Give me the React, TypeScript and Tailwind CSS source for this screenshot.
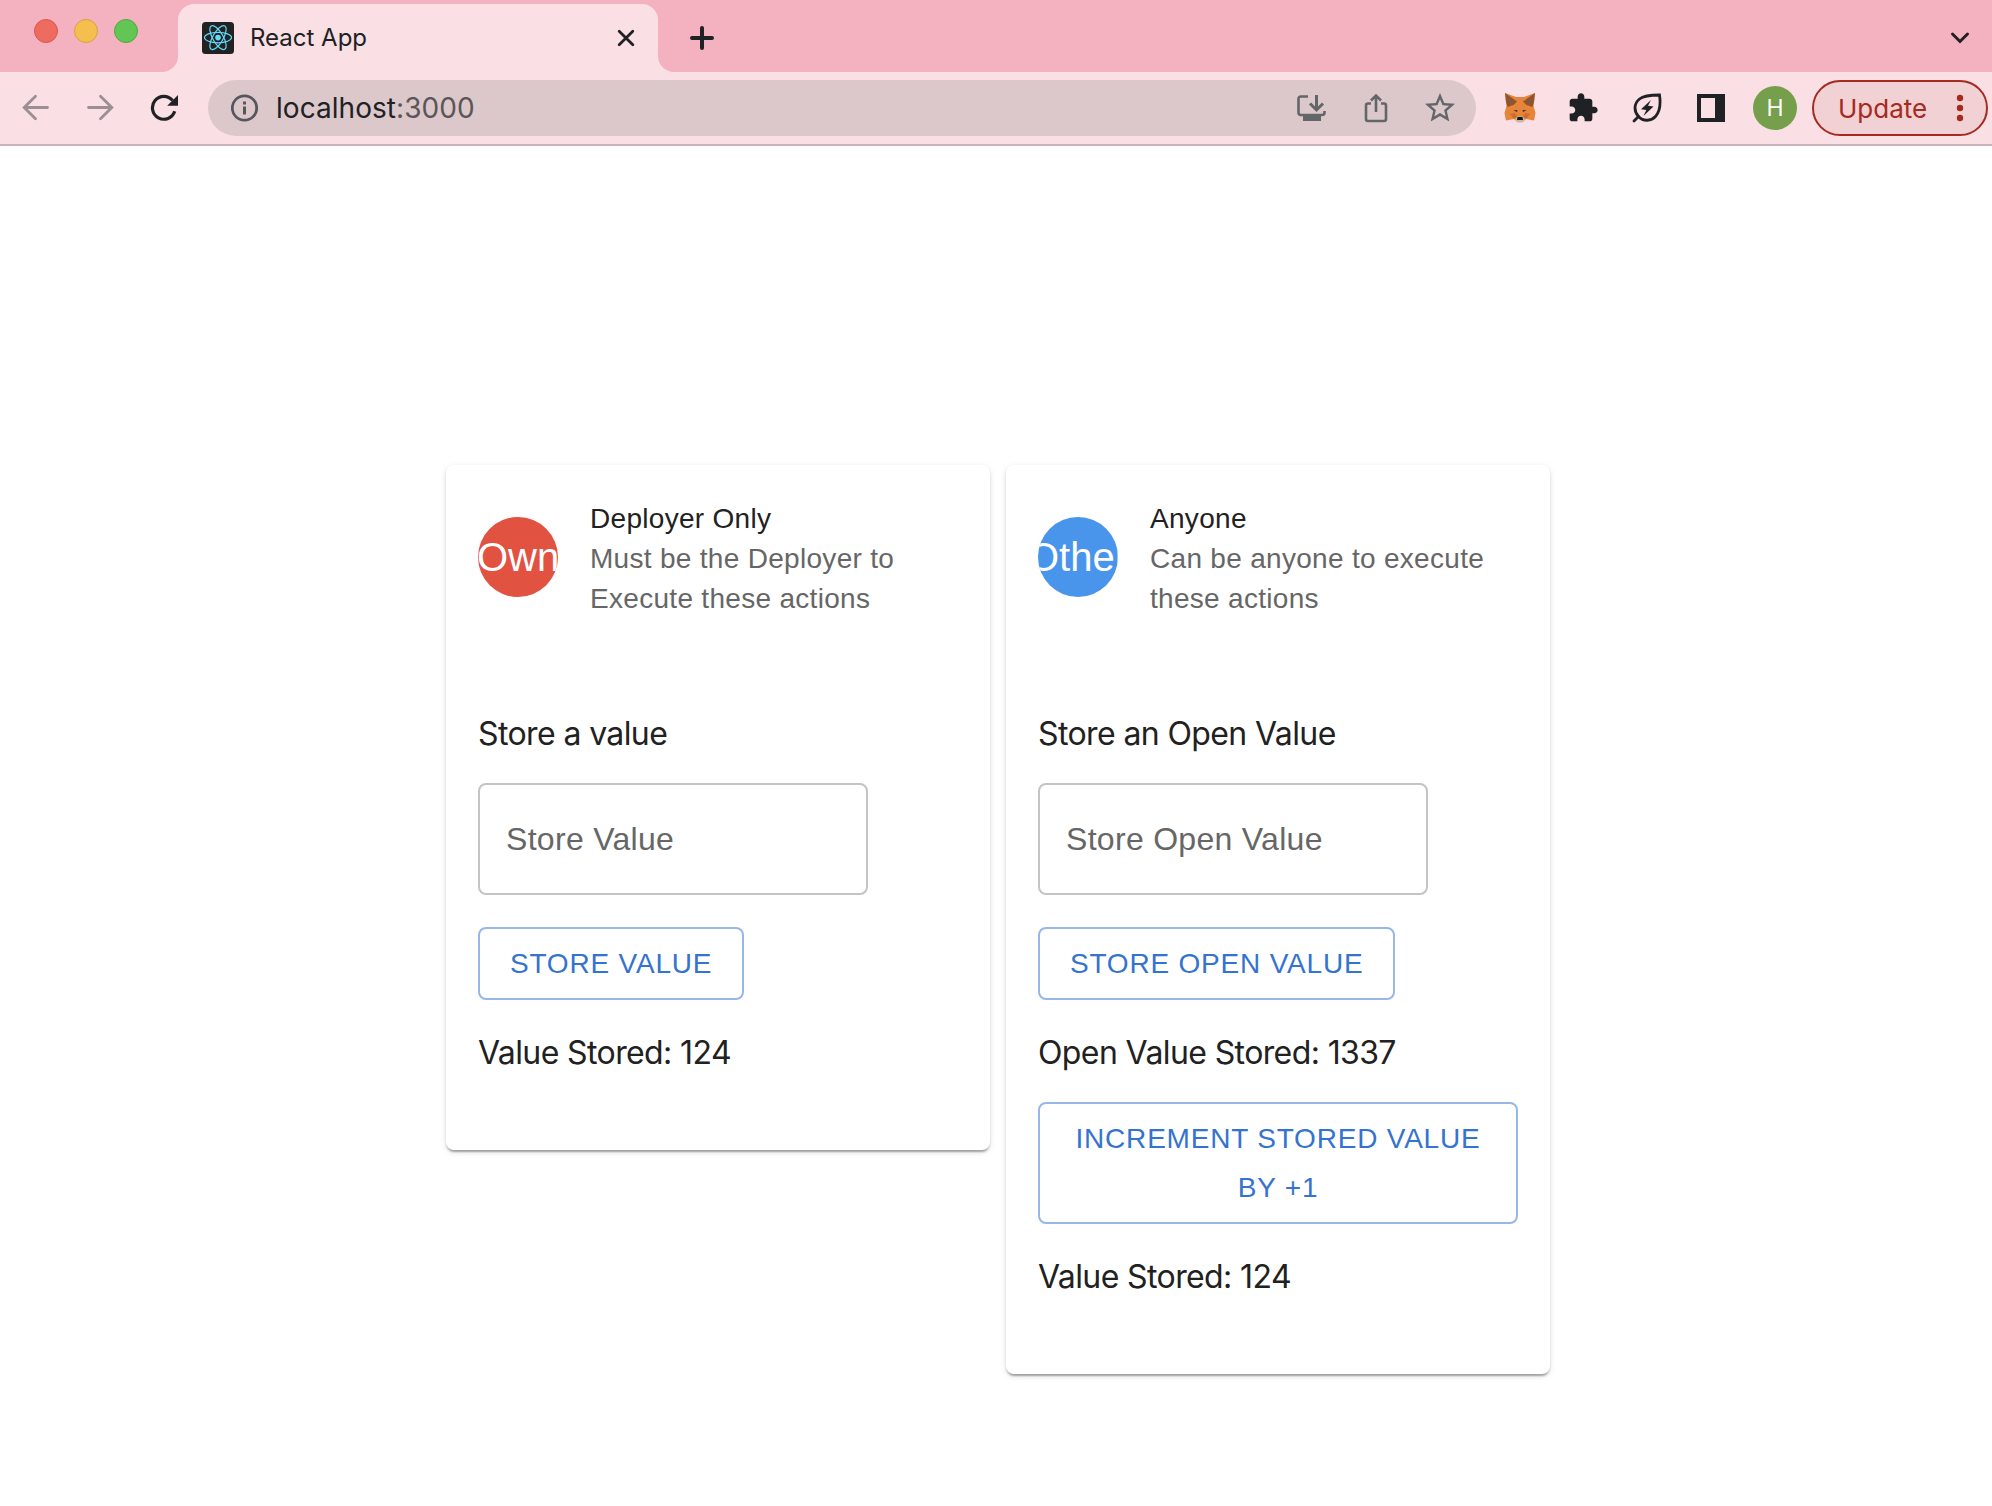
import React from "react";

const sans = "font-['Liberation_Sans',Arial,sans-serif]";
const ui = "font-[Inter,sans-serif]";

function Chevron() {
  return (
    <svg width="20" height="14" viewBox="0 0 20 14" fill="none" stroke="#202124" strokeWidth="3" strokeLinecap="round">
      <path d="M2.5 3 L10 10.5 L17.5 3" />
    </svg>
  );
}

function ReactLogo() {
  return (
    <svg width="32" height="32" viewBox="0 0 32 32" fill="none" stroke="#61dafb" strokeWidth="1.2">
      <rect width="32" height="32" rx="3.5" fill="#222" stroke="none" />
      <circle cx="16" cy="15.6" r="2.8" fill="#61dafb" stroke="none" />
      <ellipse cx="16" cy="15.6" rx="13.5" ry="5.2" />
      <ellipse cx="16" cy="15.6" rx="13.5" ry="5.2" transform="rotate(60 16 15.6)" />
      <ellipse cx="16" cy="15.6" rx="13.5" ry="5.2" transform="rotate(120 16 15.6)" />
    </svg>
  );
}

function Fox() {
  return (
    <svg width="32" height="32" viewBox="0 0 32 32">
      <path d="M1 1 L12 5 H20 L31 1 L29.5 14 L31.5 21 L30 28.5 L22 27 L18.5 30 H13.5 L10 27 L2 28.5 L0.5 21 L2.5 14 Z" fill="#e8833a" />
      <path d="M1 1 L13 9.5 L9.5 13 L3.5 15 L2 10 Z M31 1 L19 9.5 L22.5 13 L28.5 15 L30 10 Z" fill="#8f5430" />
      <path d="M6 22 L11 21 L13 25 L10 27 Z M26 22 L21 21 L19 25 L22 27 Z" fill="#cf6b2c" />
      <path d="M9.5 18 L13.5 18 L13 20.3 Z M22.5 18 L18.5 18 L19 20.3 Z" fill="#4d3a30" />
      <path d="M11 27 L13.5 24.5 H18.5 L21 27 L18.5 30.5 H13.5 Z" fill="#c5b7a8" />
      <path d="M13.5 25 H18.5 L19 28 H13 Z" fill="#161616" />
    </svg>
  );
}

function TabStrip() {
  return (
    <div className="flex h-[72px] shrink-0 bg-[#f4b1bf]">
      <div className="flex w-[178px] shrink-0 gap-4 pl-[34px] pt-[19px]">
        <span className="size-6 rounded-full border border-[#d9574c] bg-[#ed6b5f]" />
        <span className="size-6 rounded-full border border-[#d9a13e] bg-[#f5bf4f]" />
        <span className="size-6 rounded-full border border-[#4fa73f] bg-[#62c655]" />
      </div>
      <div className="-ml-4 flex w-[512px] shrink-0 bg-[#fae0e4]">
        <div className="w-4 rounded-br-[16px] bg-[#f4b1bf]" />
        <div className="flex w-[480px] flex-col bg-[#f4b1bf] pt-1">
          <div className="flex flex-1 items-center rounded-t-[16px] bg-[#fae0e4] pl-6 pr-[23px]">
            <ReactLogo />
            <span className={`${ui} ml-4 flex-1 text-[24px] leading-none text-[#202124]`}>React App</span>
            <svg width="18" height="18" viewBox="0 0 18 18" stroke="#202124" strokeWidth="2.8" strokeLinecap="round">
              <path d="M2.2 2.2 L15.8 15.8 M15.8 2.2 L2.2 15.8" />
            </svg>
          </div>
        </div>
        <div className="w-4 rounded-bl-[16px] bg-[#f4b1bf]" />
      </div>
      <div className="flex flex-1 items-center justify-between pl-4 pr-[22px] pt-1">
        <svg width="24" height="24" viewBox="0 0 24 24" stroke="#202124" strokeWidth="4" strokeLinecap="round">
          <path d="M12 2 V22 M2 12 H22" />
        </svg>
        <Chevron />
      </div>
    </div>
  );
}

function AddressBar() {
  return (
    <div className="flex h-14 w-[1268px] items-center rounded-full bg-[#dcc8ca] pl-[23px] pr-[20px]">
      <svg width="28" height="28" viewBox="0 0 28 28" fill="none" stroke="#54585d" strokeWidth="2.8">
        <circle cx="13.5" cy="14" r="12.2" />
        <path d="M13.5 12.5 V20.5 M13.5 7.5 V10.4" strokeWidth="3" />
      </svg>
      <span className={`${ui} ml-[17px] flex-1 text-[28px] leading-none tracking-[0.05px] text-[#202124]`}>
        localhost<span className="text-[#5a5557]">:3000</span>
      </span>
      <svg width="30" height="28" viewBox="0 0 30 28" fill="none" stroke="#636668" strokeWidth="2.6">
        <path d="M12 2.5 H5 Q2.5 2.5 2.5 5 V18.5 Q2.5 21 5 21 H26 Q28.5 21 28.5 18.5 V17" />
        <path d="M7 22 H25 V27 H7 Z" fill="#636668" stroke="none" />
        <path d="M20.5 1 V15 M14 9.5 L20.5 16 L27 9.5" strokeWidth="3" />
      </svg>
      <svg className="ml-[37px]" width="26" height="30" viewBox="0 0 26 30" fill="none" stroke="#636668" strokeWidth="2.6">
        <path d="M8 10.5 H5 Q3 10.5 3 12.5 V26 Q3 28 5 28 H21 Q23 28 23 26 V12.5 Q23 10.5 21 10.5 H18" />
        <path d="M13 19 V3 M8 7.5 L13 2.5 L18 7.5" />
      </svg>
      <svg className="-mr-[2px] ml-[33px]" width="36" height="36" viewBox="0 0 24 24" fill="#636668">
        <path d="M22 9.24l-7.19-.62L12 2 9.19 8.63 2 9.24l5.46 4.73L5.82 21 12 17.27 18.18 21l-1.63-7.03L22 9.24zM12 15.4l-3.76 2.27 1-4.28-3.32-2.88 4.38-.38L12 6.1l1.71 4.04 4.38.38-3.32 2.88 1 4.28L12 15.4z" />
      </svg>
    </div>
  );
}

function Toolbar() {
  return (
    <div className="flex h-[74px] shrink-0 items-center border-b-2 border-[#c9b4bb] bg-[#fae0e4] pl-[22px] pr-1">
      <svg width="28" height="28" viewBox="0 0 28 28" fill="none" stroke="#9c8e92" strokeWidth="2.8" strokeLinecap="round">
        <path d="M25.5 13.5 H3 M13.5 2.2 L2.200 13.500 L13.500 24.800" />
      </svg>
      <svg className="ml-[36px]" width="28" height="28" viewBox="0 0 28 28" fill="none" stroke="#9c8e92" strokeWidth="2.8" strokeLinecap="round">
        <path d="M2.500 13.500 H25 M14.500 2.200 L25.800 13.500 L14.500 24.800" />
      </svg>
      <svg className="ml-[36px]" width="30" height="28" viewBox="0 0 30 28" fill="none">
        <path d="M24.7 17.3 A11.4 11.4 0 1 1 22.6 6.5" stroke="#202124" strokeWidth="3.2" />
        <path d="M28 1 V11.8 H17.2 Z" fill="#202124" />
      </svg>
      <div className="ml-[28px]">
        <AddressBar />
      </div>
      <div className="ml-[28px] flex items-center">
        <Fox />
        <svg className="ml-[31px]" width="32" height="32" viewBox="0 0 24 24" fill="#202124">
          <path d="M20.5 11H19V7c0-1.100-.9-2-2-2h-4V3.500C13 2.120 11.880 1 10.500 1S8 2.120 8 3.500V5H4c-1.100 0-1.990.9-1.990 2v3.800H3.500c1.490 0 2.700 1.210 2.700 2.700s-1.210 2.700-2.700 2.700H2V20c0 1.100.9 2 2 2h3.800v-1.500c0-1.490 1.210-2.700 2.700-2.700s2.700 1.210 2.700 2.700V22H17c1.100 0 2-.9 2-2v-4h1.500c1.380 0 2.500-1.120 2.500-2.500S21.880 11 20.500 11z" />
        </svg>
        <svg className="ml-[33px]" width="30" height="30" viewBox="0 0 30 30" fill="none" stroke="#202124" strokeWidth="2.8">
          <path d="M27.500 2 C29 12 27.500 19 23.500 23.500 C19.500 28 11.500 29 6.500 23.500 C1.500 18 2 10.500 7.500 6 C12 2.300 19 2 27.500 2 Z" />
          <path d="M6.500 23.500 L2 28" strokeLinecap="round" />
          <path d="M19 7 L9 16.300 L14.300 17 L11.500 23 L21.500 13.500 L16 12.800 Z" fill="#202124" stroke="none" />
        </svg>
        <span className="ml-[35px] h-7 w-7 border-y-4 border-l-4 border-r-[10px] border-[#202124]" />
        <span className={`${ui} ml-[28px] flex size-11 items-center justify-center rounded-full bg-[#759f4a] text-[23px] text-white`}>H</span>
      </div>
      <div className={`${ui} ml-auto flex h-14 w-[176px] items-center justify-between rounded-full border-2 border-[#a52a20] bg-[#f2d1d5] pl-6 pr-[22px] text-[26px] text-[#a52a20]`}>
        Update
        <svg width="8" height="28" viewBox="0 0 8 28" fill="#a52a20">
          <circle cx="4" cy="4" r="3.200" />
          <circle cx="4" cy="14" r="3.200" />
          <circle cx="4" cy="24" r="3.200" />
        </svg>
      </div>
    </div>
  );
}

const cardClass =
  "w-[544px] rounded-lg bg-white px-8 pt-8 shadow-[0_4px_2px_-2px_rgba(0,0,0,0.2),0_2px_2px_0_rgba(0,0,0,0.14),0_2px_6px_0_rgba(0,0,0,0.12)]";

function Header({ color, label, title, children }: { color: string; label: string; title: string; children: React.ReactNode }) {
  return (
    <div className={`${sans} flex h-[120px] items-center`}>
      <div className={`flex size-20 shrink-0 items-center justify-center overflow-hidden rounded-full text-[40px] leading-none text-white ${color}`}>
        {label}
      </div>
      <div className="ml-8 pt-[3px] text-[28px] leading-[40px] tracking-[0.3px] text-[#666]">
        <div className="text-[#212121]">{title}</div>
        {children}
      </div>
    </div>
  );
}

function Line({ children }: { children: React.ReactNode }) {
  return <p className={`${ui} h-12 text-[32px] leading-[50px] tracking-[-0.61px] text-[#212121]`}>{children}</p>;
}

function Field({ label }: { label: string }) {
  return (
    <div className={`${sans} mt-[26px] flex h-28 w-[390px] items-center rounded-lg border-2 border-[#c4c4c4] pl-[26px] text-[32px] leading-none tracking-[0.3px] text-[#666]`}>
      {label}
    </div>
  );
}

function Button({ children }: { children: React.ReactNode }) {
  return (
    <button className={`${sans} block rounded-lg border-2 border-[#98b7e8] px-[30px] py-[10px] text-center text-[28px] leading-[49px] tracking-[0.8px] text-[#3473cf]`}>
      {children}
    </button>
  );
}

export default function App() {
  return (
    <div className="flex h-[1506px] w-[1992px] flex-col overflow-hidden bg-white">
      <TabStrip />
      <Toolbar />
      <main className="flex items-start gap-4 pl-[446px] pt-[319px]">
        <section className={`${cardClass} h-[685px]`}>
          <Header color="bg-[#e25241]" label="Own" title="Deployer Only">
            Must be the Deployer to
            <br />
            Execute these actions
          </Header>
          <div className="pt-[92px]">
            <Line>Store a value</Line>
            <Field label="Store Value" />
            <div className="pb-7 pt-8">
              <Button>STORE VALUE</Button>
            </div>
            <Line>Value Stored: 124</Line>
          </div>
        </section>
        <section className={`${cardClass} h-[909px]`}>
          <Header color="bg-[#4995ec]" label="Other" title="Anyone">
            Can be anyone to execute
            <br />
            these actions
          </Header>
          <div className="pt-[92px]">
            <Line>Store an Open Value</Line>
            <Field label="Store Open Value" />
            <div className="pb-7 pt-8">
              <Button>STORE OPEN VALUE</Button>
            </div>
            <Line>Open Value Stored: 1337</Line>
            <div className="pb-7 pt-[26px]">
              <Button>INCREMENT STORED VALUE BY +1</Button>
            </div>
            <Line>Value Stored: 124</Line>
          </div>
        </section>
      </main>
    </div>
  );
}
